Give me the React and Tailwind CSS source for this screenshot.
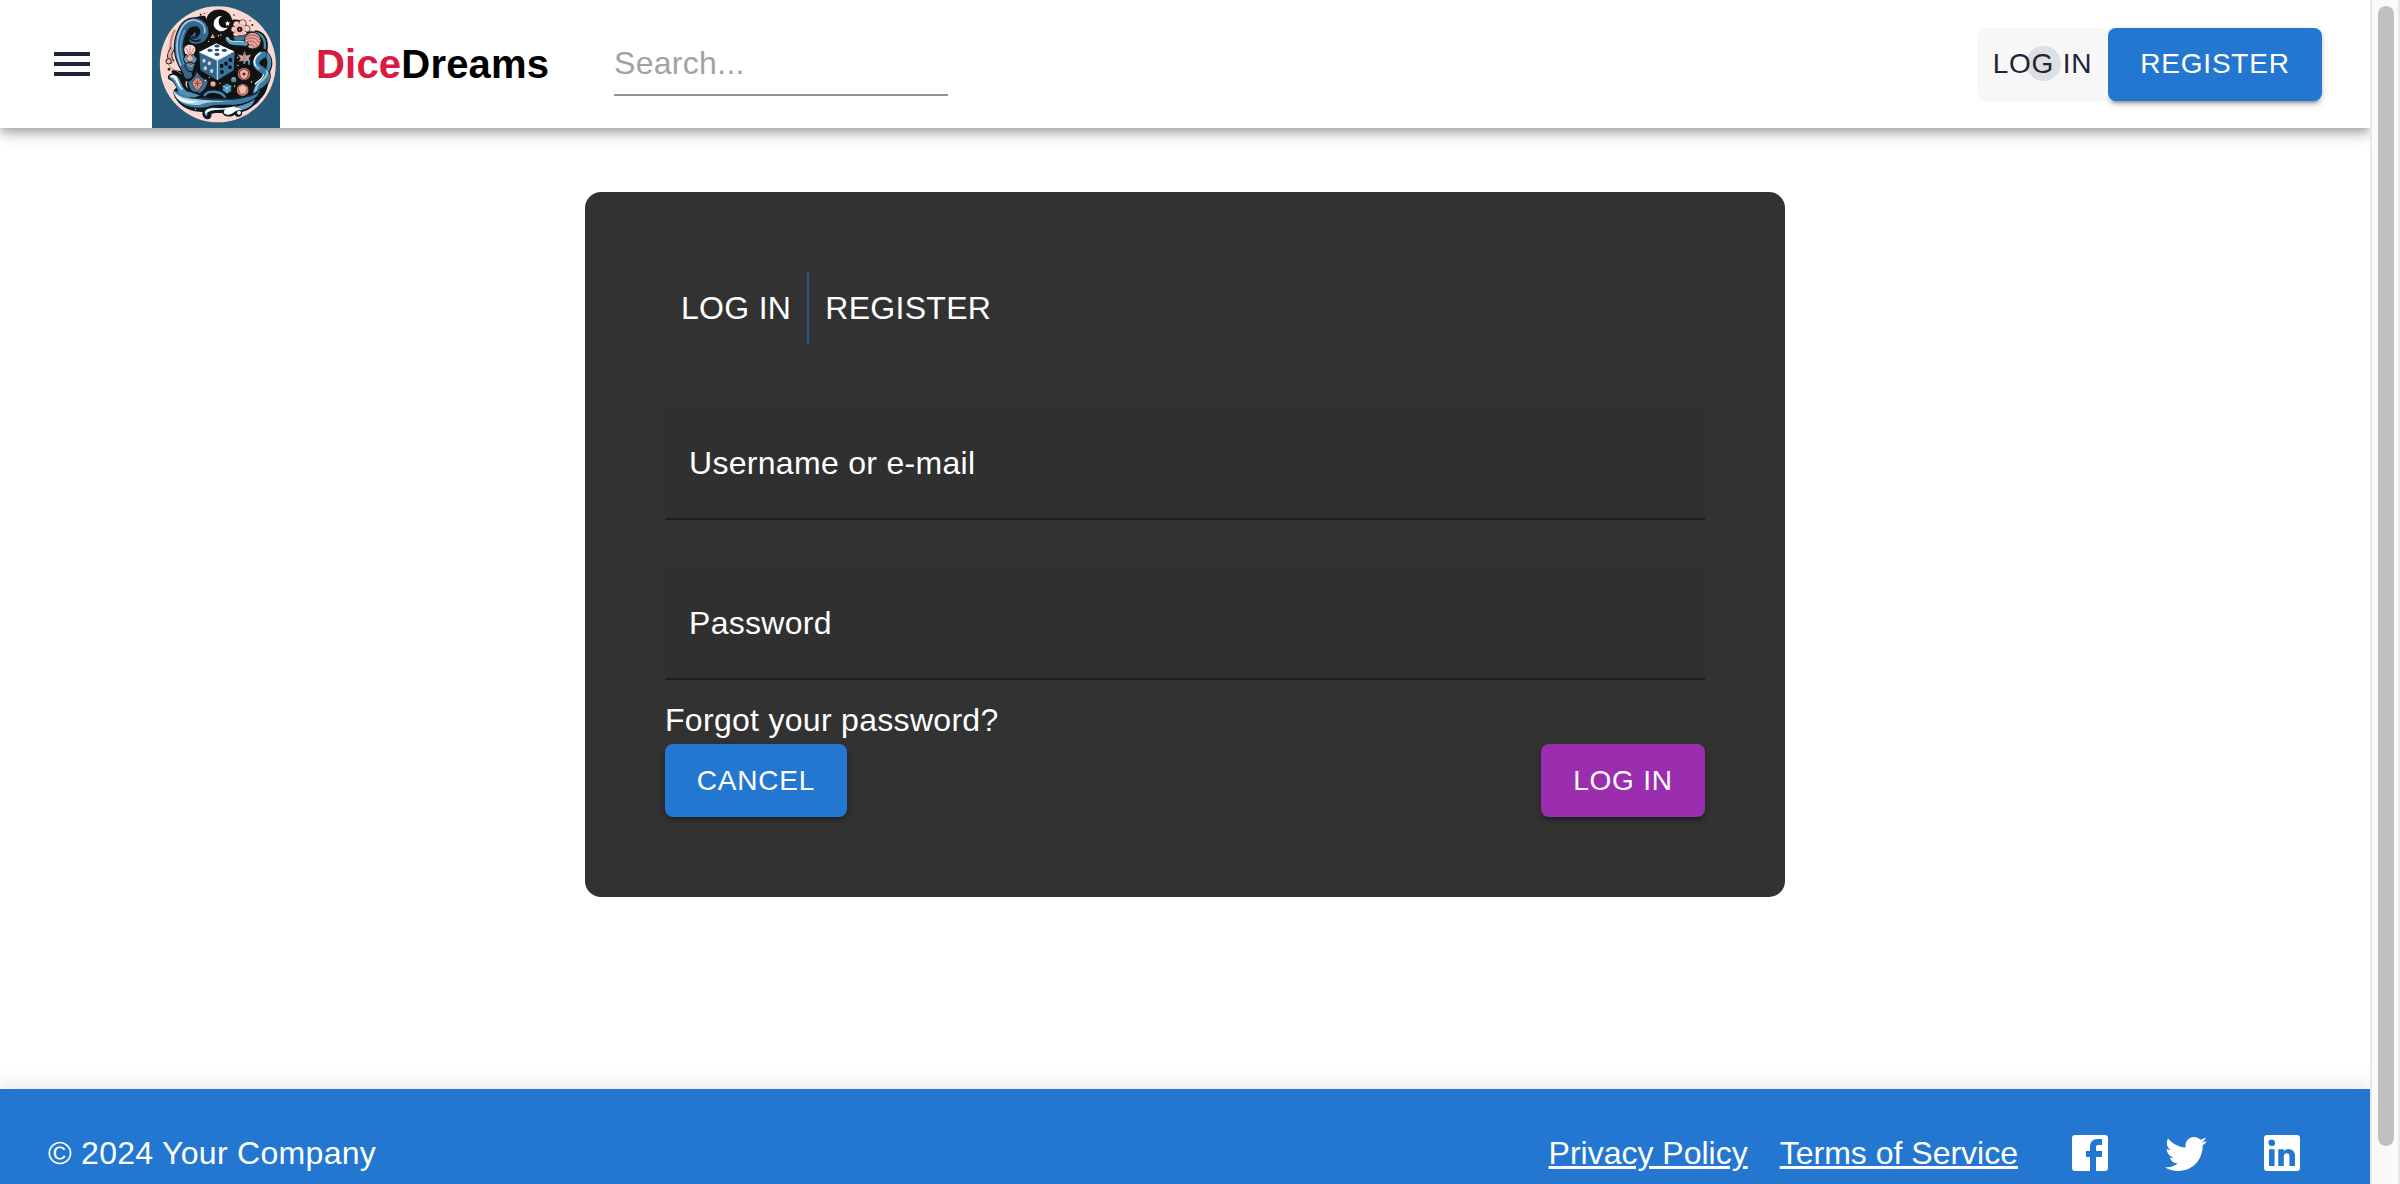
const SHADOW_BTN = "shadow-[0_6px_2px_-4px_rgba(0,0,0,0.2),0_4px_4px_0_rgba(0,0,0,0.14),0_2px_10px_0_rgba(0,0,0,0.12)]";

function Logo() {
  return (
    <svg viewBox="36 0 384 384" className="block h-32 w-32 shrink-0">
      <rect x="36" width="384" height="384" fill="#285a7a" />
      <circle cx="233.500" cy="193" r="174" fill="#fbd8d1" />
      {/* dark ground behind the figures */}
      <path d="M200 58c4-40 72-40 76 2 20-6 48 8 52 34 26-4 50 14 48 42 8 16 12 30 4 46 14 22 14 56 4 72-4 18-12 36-28 46-20 22-50 32-80 34-60 2-112-16-130-54-24-18-42-44-52-66 4-6 22-2 34 0-18-30-18-60-12-78-4-40 22-84 70-88 10-2 10 0 14 10z" fill="#12130f" />
      {/* moon */}
      <path d="M246 48a23 23 0 1 0 18 34 19 19 0 1 1-18-34z" fill="#fff" />
      <path d="M263 62l2 5 6 1-5 4 2 6-5-3-5 3 1-6-4-4 6-1z" fill="#fff" />
      {/* upper left curl */}
      <g fill="none" strokeLinecap="round">
        <path d="M104 92c-14 24-16 60-8 88" stroke="#c9827a" strokeWidth="7" />
        <path d="M160 118c22 6 38-10 32-32-10-28-48-24-62 2-18 34-18 66-4 98 6 14 14 22 18 38" stroke="#0c1720" strokeWidth="30" />
        <path d="M160 118c22 6 38-10 32-32-10-28-48-24-62 2-18 34-18 66-4 98 6 14 14 22 18 38" stroke="#34698c" strokeWidth="24" />
        <path d="M194 98c6-34-38-52-64-22-24 34-24 80-8 120" stroke="#9ccce6" strokeWidth="5" />
        <path d="M150 84c-24 28-22 66-8 98" stroke="#112a3b" strokeWidth="3" />
        <path d="M134 92c-18 32-14 70-2 100" stroke="#5f9dc2" strokeWidth="4" />
        <path d="M156 112c14 6 24-10 14-18-14-8-28 6-20 20 6 10 20 12 30 6" stroke="#0d1a24" strokeWidth="5" />
        <path d="M160 104c6 2 8-4 4-6" stroke="#7fb3d0" strokeWidth="3" />
      </g>
      {/* left shells */}
      <path d="M98 146c-12 14-12 28 0 42" fill="none" stroke="#1b1715" strokeWidth="15" />
      <path d="M98 146c-12 14-12 28 0 42" fill="none" stroke="#eaa79b" strokeWidth="10" />
      <circle cx="86" cy="184" r="8" fill="#f4b9ad" stroke="#1b1715" strokeWidth="3" />
      <path d="M86 196c8 14 26 14 38 26" fill="none" stroke="#b9776d" strokeWidth="3" />
      <path d="M132 154c-6-24 34-30 36-4l-10 22-20-2z" fill="#fadad3" stroke="#1b1b1b" strokeWidth="3" />
      <path d="M149 170l-10-26m11 26v-32m1 32l10-26" stroke="#b36f66" strokeWidth="2.500" />
      <path d="M130 178l8-16 10 12 12-12 12 16-12 20h-20z" fill="#5f9abd" stroke="#111" strokeWidth="3" />
      <path d="M138 176l12-14 12 14-12 10z" fill="#efae9f" stroke="#5b2d28" strokeWidth="1.500" />
      <path d="M134 194c8-10 24-10 32 0l-8 22-16-4z" fill="#3c7398" stroke="#111" strokeWidth="3" />
      <path d="M142 192l10 8 8-6" fill="none" stroke="#f0b2a5" strokeWidth="3" />
      {/* teardrop ornament */}
      <path d="M170 210c4 16 18 24 34 34-2 20-16 32-32 42-14-8-28-22-28-40 14-8 22-18 26-36z" fill="#39749a" stroke="#0d1821" strokeWidth="3" />
      <path d="M172 228l18 22-18 26-17-26z" fill="#e69c8f" stroke="#40201d" strokeWidth="2" />
      <path d="M156 250h33M172 230v44M164 240l16 20m0-20l-16 20" stroke="#6e342e" strokeWidth="1.800" />
      <path d="M140 244c-6 20 4 32 20 40" fill="none" stroke="#f0b3a6" strokeWidth="5" />
      {/* flower */}
      <g fill="#fad3ca" stroke="#2a1a17" strokeWidth="2">
        <circle cx="290" cy="74" r="11" /><circle cx="308" cy="70" r="11" /><circle cx="320" cy="86" r="10" />
        <circle cx="310" cy="102" r="11" /><circle cx="290" cy="102" r="11" /><circle cx="282" cy="88" r="9" />
      </g>
      <circle cx="300" cy="88" r="17" fill="#f3b9ab" />
      <circle cx="299" cy="88" r="8" fill="#1a1512" /><circle cx="299" cy="88" r="2.500" fill="#f3b9ab" />
      <path d="M280 108c12 4 18-4 26 0 8-6 12-2 18-6l-8 20-32 2z" fill="#3c779d" stroke="#111" strokeWidth="2" />
      {/* planet and ribbon */}
      <path d="M344 98c24 2 36 20 32 50" fill="none" stroke="#0e1920" strokeWidth="14" />
      <path d="M344 99c22 2 34 20 30 48" fill="none" stroke="#4988af" strokeWidth="7" />
      <circle cx="338" cy="122" r="25" fill="#efa193" stroke="#1d1a1a" strokeWidth="3" />
      <path d="M318 112c14-12 36-8 42 8M316 120c16-12 36-6 42 10M318 128c14-10 30-4 34 12M322 137c10-6 20-2 24 8" fill="none" stroke="#7a5560" strokeWidth="2.500" />
      <path d="M262 118c8 22 34 10 56 16" fill="none" stroke="#0d1821" strokeWidth="17" strokeLinecap="round" />
      <path d="M262 116c8 22 34 10 56 16" fill="none" stroke="#5b9bc1" strokeWidth="11" strokeLinecap="round" />
      <path d="M261 113c10 18 30 8 50 12" fill="none" stroke="#d5eaf4" strokeWidth="3" strokeLinecap="round" />
      {/* right waves */}
      <g fill="none" strokeLinecap="round">
        <path d="M374 160c16 12 18 34 8 52" stroke="#0e1820" strokeWidth="18" />
        <path d="M376 160c14 12 16 34 6 52" stroke="#4a8ab2" strokeWidth="12" />
        <path d="M368 164c-26 16-28 32-6 44 28 18 18 32-4 48-10 8-12 20-12 30" stroke="#0e1820" strokeWidth="26" />
        <path d="M370 164c-28 16-28 32-6 44 28 18 18 32-4 48-10 8-12 20-12 30" stroke="#3d7aa0" strokeWidth="19" />
        <path d="M362 158c-22 16-24 36-6 48M380 212c6 14-8 24-24 38-6 8-10 18-10 28" stroke="#8fc3de" strokeWidth="6" />
        <path d="M358 160c-16 12-18 26-12 36M346 252c8-10 24-16 24-28" stroke="#f2f9fc" strokeWidth="4" />
      </g>
      {/* rocket */}
      <path d="M314 150l5 16 16-4-8 14 6 10-14-3-5 9-5-9-15 3 7-10-9-14 17 4z" fill="#e2998d" stroke="#151010" strokeWidth="2" />
      <path d="M313 158v34M327 180v14" stroke="#5d9dc3" strokeWidth="5" />
      {/* dice */}
      <path d="M229 126l58 27-4 60-51 32-56-32-2-58z" fill="#0d1418" />
      <path d="M229 130l53 24-50 26-54-24z" fill="#fdfefe" />
      <path d="M178 157l53 24v59l-50-29z" fill="#2c6791" />
      <path d="M284 155l-3 56-49 30v-60z" fill="#3975a0" />
      <path d="M178 156l54 25 50-27M232 181v58" fill="none" stroke="#f3fafc" strokeWidth="3" />
      <g fill="#21547a">
        <ellipse cx="231" cy="138" rx="8" ry="4.800" /><ellipse cx="210" cy="151" rx="8" ry="4.800" />
        <ellipse cx="253" cy="151" rx="8" ry="4.800" /><ellipse cx="231" cy="163" rx="8" ry="4.800" />
        <ellipse cx="231" cy="150" rx="7" ry="4" />
      </g>
      <g fill="#f5c3b8">
        <ellipse cx="192" cy="182" rx="5" ry="6" /><ellipse cx="208" cy="190" rx="5" ry="6" />
        <ellipse cx="196" cy="205" rx="5" ry="6" /><ellipse cx="215" cy="213" rx="5" ry="6" />
      </g>
      <g fill="#0b1319">
        <ellipse cx="271" cy="180" rx="5.500" ry="6.500" /><ellipse cx="258" cy="191" rx="5.500" ry="6.500" />
        <ellipse cx="245" cy="198" rx="5.500" ry="6.500" /><ellipse cx="270" cy="202" rx="5.500" ry="6" />
        <ellipse cx="246" cy="216" rx="5.500" ry="6" />
      </g>
      {/* gems */}
      <circle cx="312" cy="222" r="20" fill="#b9776d" stroke="#1b1211" strokeWidth="3" />
      <path d="M312 206l14 9-3 17-11 7-11-7-3-17z" fill="#eeb2a4" stroke="#5b2d28" strokeWidth="2.500" />
      <circle cx="312" cy="222" r="4.500" fill="#532823" />
      <circle cx="308" cy="270" r="19" fill="#d08378" stroke="#1b1211" strokeWidth="3" />
      <path d="M294 262l14-9 14 10-5 18-16 2z" fill="#f3bbad" stroke="#773e38" strokeWidth="2" />
      <path d="M261 249l14 8v17l-14 8-14-8v-17z" fill="#4387b1" stroke="#0c1820" strokeWidth="2.500" />
      <path d="M248 258l13 6 13-6m-13 6v16M254 270l7-6 7 6" fill="none" stroke="#b9dff0" strokeWidth="2" />
      <circle cx="219" cy="252" r="9" fill="#ec9f92" stroke="#2b1815" strokeWidth="2" />
      <path d="M213 250c4-4 9-3 12 2" fill="none" stroke="#fbdcd5" strokeWidth="2.500" />
      <circle cx="281" cy="239" r="8" fill="#4c8cb2" /><path d="M276 237l5-4 5 4" fill="none" stroke="#cfe7f2" strokeWidth="2" />
      {/* lower waves */}
      <path d="M84 236c-4-18 24-22 36-8 10 12 14 30 24 38 14 12 32 8 44 16 20 12 70 12 110 8 36-4 54-14 64-26 14 30-14 56-50 66-36 4-62-4-92 4-50 8-92-4-112-36-12-18-8-32 2-34-6-12-10-20-20-24z" fill="#0d1820" />
      <path d="M88 234c0-14 20-12 28 0 8 14 12 30 24 40l40 12-30 12-34-18c-6-22-10-36-28-46z" fill="#4f90b8" />
      <path d="M89 231c4-9 18-8 23 4 7 16 9 26 17 35-14-6-16-20-24-31-4-5-9-8-16-8z" fill="#f6fbfd" />
      <path d="M104 272c12 2 22 14 42 18 40 6 90 10 142 6 36-4 58-12 72-26-4 22-28 36-58 42-36 6-66-2-98 8-44 10-78-4-92-22-8-10-12-20-8-26z" fill="#3f7ca4" />
      <path d="M102 274c10 16 40 24 72 24 40 2 70 6 104 2-40 10-68 2-98 14-34 4-60-6-72-22-5-7-7-13-6-18z" fill="#a7d1e7" />
      <path d="M106 280c14 18 38 24 66 24-16 10-42 4-54-4-7-5-11-12-12-20z" fill="#fafdfe" />
      <path d="M150 292c60 12 150 14 206-14" fill="none" stroke="#12293a" strokeWidth="3" />
      <path d="M192 286c8-20 54-18 66 4" fill="none" stroke="#0d1820" strokeWidth="12" strokeLinecap="round" />
      <path d="M194 286c10-16 48-14 60 4" fill="none" stroke="#4988af" strokeWidth="7" strokeLinecap="round" />
      {/* curled foam */}
      <path d="M190 350c-10-20 8-34 38-32 46 2 90-4 124-28-2 24-22 40-46 46 4 14-14 20-22 8-12 10-34 6-36-4-12-2-26-2-34 2 4 12-12 24-24 8z" fill="#0d171e" />
      <path d="M196 346c-8-16 8-24 32-23 44 3 88-4 116-26-4 20-18 28-42 34-22 0-40-6-60-2-16 0-34 0-40 8 2 10-2 14-6 9z" fill="#5b9cc2" />
      <path d="M196 342c-4-14 12-18 34-17 22 0 40-2 58-7-12 12-30 10-48 11-16 0-32 2-44 13z" fill="#f7fcfd" />
      <path d="M252 340c-4-14 16-16 30-18 10 2 20 4 26 8-16-2-20 4-28 8-12 8-22 8-28 2z" fill="#f7fcfd" />
      <circle cx="297" cy="338" r="6" fill="#eaf5fa" />
      {/* stars and ink specks */}
      <path d="M218 101l7 13h-14z" fill="#e99f91" />
      <g fill="#fff">
        <circle cx="235" cy="107" r="2" /><circle cx="243" cy="105" r="2" /><circle cx="206" cy="124" r="2" />
        <circle cx="294" cy="196" r="2" /><circle cx="293" cy="172" r="2" /><circle cx="197" cy="241" r="2.500" />
        <circle cx="284" cy="258" r="2" /><circle cx="240" cy="250" r="2" /><circle cx="166" cy="328" r="2" />
        <circle cx="334" cy="246" r="2" /><circle cx="208" cy="232" r="2" />
      </g>
      <g fill="#171713">
        <circle cx="182" cy="44" r="3" /><circle cx="193" cy="40" r="2" /><circle cx="187" cy="52" r="2.500" />
        <circle cx="282" cy="45" r="2.500" /><circle cx="337" cy="75" r="3" /><circle cx="330" cy="62" r="2" />
        <circle cx="87" cy="208" r="4" /><circle cx="99" cy="213" r="2" />
      </g>
    </svg>
  );
}

function Icon({ d, className }) {
  return (
    <svg viewBox="0 0 24 24" fill="currentColor" className={className}>
      <path d={d} />
    </svg>
  );
}

const MENU = "M3 18h18v-2H3v2zm0-5h18v-2H3v2zm0-7v2h18V6H3z";
const FACEBOOK = "M4.500 3h15A1.500 1.500 0 0 1 21 4.500v15a1.500 1.500 0 0 1-1.500 1.500H15v-7h3v-3h-3V9a1 1 0 0 1 1-1h2V5h-2.500A3.500 3.500 0 0 0 12 8.500V11h-2v3h2v7H4.500A1.500 1.500 0 0 1 3 19.500v-15A1.500 1.500 0 0 1 4.500 3z";
const TWITTER = "M22.460 6c-.77.35-1.600.58-2.460.69.88-.53 1.560-1.370 1.880-2.380-.83.5-1.750.85-2.720 1.050C18.370 4.500 17.260 4 16 4c-2.350 0-4.270 1.920-4.270 4.290 0 .34.04.67.11.98C8.280 9.090 5.110 7.380 3 4.790c-.37.63-.58 1.370-.58 2.150 0 1.490.75 2.810 1.910 3.560-.71 0-1.370-.2-1.950-.5v.03c0 2.080 1.480 3.820 3.440 4.210a4.220 4.220 0 0 1-1.930.07 4.280 4.280 0 0 0 4 2.980 8.521 8.521 0 0 1-5.330 1.840c-.34 0-.68-.02-1.020-.06C3.440 20.290 5.700 21 8.120 21 16 21 20.330 14.460 20.330 8.790c0-.19 0-.37-.01-.56.84-.6 1.560-1.360 2.140-2.230z";
const LINKEDIN = "M19.500 3A1.500 1.500 0 0 1 21 4.500v15a1.500 1.500 0 0 1-1.500 1.500h-15A1.500 1.500 0 0 1 3 19.500v-15A1.500 1.500 0 0 1 4.500 3h15m-1 15.500v-5.300a3.260 3.260 0 0 0-3.260-3.260c-.85 0-1.840.52-2.320 1.300v-1.110h-2.790v8.370h2.790v-4.930c0-.77.62-1.400 1.390-1.400a1.400 1.400 0 0 1 1.400 1.400v4.930h2.790M6.880 8.560a1.680 1.680 0 0 0 1.680-1.680c0-.93-.75-1.690-1.680-1.690a1.690 1.690 0 0 0-1.690 1.690c0 .93.76 1.680 1.690 1.680m1.390 9.940v-8.370H5.500v8.370h2.770z";

function Field({ label }) {
  return (
    <div className="flex h-28 items-center rounded-t-lg border-b-2 border-[#1d1d1d] bg-[#303030] px-6">
      <span>{label}</span>
    </div>
  );
}

export default function App() {
  return (
    <div className="flex h-[1184px] w-[2400px] overflow-hidden bg-white font-['Liberation_Sans',Arial,sans-serif] text-[32px] leading-[48px] tracking-[0.3px]">
      <div className="flex w-[2370px] flex-col overflow-hidden">
        <header className="relative flex h-32 shrink-0 items-center bg-white pr-12 pl-12 shadow-[0_4px_8px_-2px_rgba(0,0,0,0.2),0_8px_10px_0_rgba(0,0,0,0.14),0_2px_20px_0_rgba(0,0,0,0.12)]">
          <Icon d={MENU} className="h-12 w-12 text-[#1c2536]" />
          <div className="ml-14">
            <Logo />
          </div>
          <h1 className="ml-9 w-[234px] text-[40px] font-bold tracking-[0.2px] whitespace-nowrap text-black">
            <span className="text-[#dc1a40]">Dice</span>Dreams
          </h1>
          <div className="ml-16 h-16 w-[334px] border-b-2 border-[#919191] text-[#a2a2a2]">
            <span className="block pt-[7px]">Search...</span>
          </div>
          <div className="ml-auto flex text-[28px] font-medium tracking-[0.8px]">
            <button className="relative h-[73px] w-[131px] rounded-lg bg-[#f7f7f7] text-[#1c2536]">
              <span className="absolute top-[18px] left-[49px] h-[35px] w-[35px] rounded-full bg-[#dedfe1]" />
              <span className="relative">LOG IN</span>
            </button>
            <button className={"h-[73px] w-[214px] rounded-lg bg-[#2377d0] text-white " + SHADOW_BTN}>REGISTER</button>
          </div>
        </header>

        <main className="flex flex-1 flex-col items-center pt-16">
          <section className="flex h-[705px] w-[1200px] flex-col rounded-2xl bg-[#323232] p-20 text-white">
            <nav className="flex h-[72px]">
              <a className="border-r-2 border-[#2a5685] px-4 pt-3">LOG IN</a>
              <a className="px-4 pt-3">REGISTER</a>
            </nav>
            <div className="mt-16 flex flex-col gap-12">
              <Field label="Username or e-mail" />
              <Field label="Password" />
            </div>
            <a className="mt-4">Forgot your password?</a>
            <div className="flex justify-between text-[28px] font-medium tracking-[0.8px]">
              <button className={"h-[73px] w-[182px] rounded-lg bg-[#2377d0] " + SHADOW_BTN}>CANCEL</button>
              <button className={"h-[73px] w-[164px] rounded-lg bg-[#9b2eae] " + SHADOW_BTN}>LOG IN</button>
            </div>
          </section>
        </main>

        <footer className="relative flex h-[95px] shrink-0 items-start justify-between bg-[#2377d0] pt-10 pr-16 pl-12 text-white shadow-[0_-4px_20px_rgba(0,0,0,0.1)]">
          <span>© 2024 Your Company</span>
          <div className="flex items-center">
            <a className="tracking-normal underline decoration-[3px] underline-offset-[2px]">Privacy Policy</a>
            <a className="ml-8 tracking-normal underline decoration-[3px] underline-offset-[2px]">Terms of Service</a>
            <Icon d={FACEBOOK} className="ml-12 h-12 w-12" />
            <Icon d={TWITTER} className="ml-12 h-12 w-12" />
            <Icon d={LINKEDIN} className="ml-12 h-12 w-12" />
          </div>
        </footer>
      </div>

      <div className="h-full w-[30px] border-r-2 border-l-2 border-[#e8e8e8] bg-[#fafafa] px-[6px] pt-[6px]">
        <div className="h-[1140px] w-4 rounded-full bg-[#c1c1c1]" />
      </div>
    </div>
  );
}
